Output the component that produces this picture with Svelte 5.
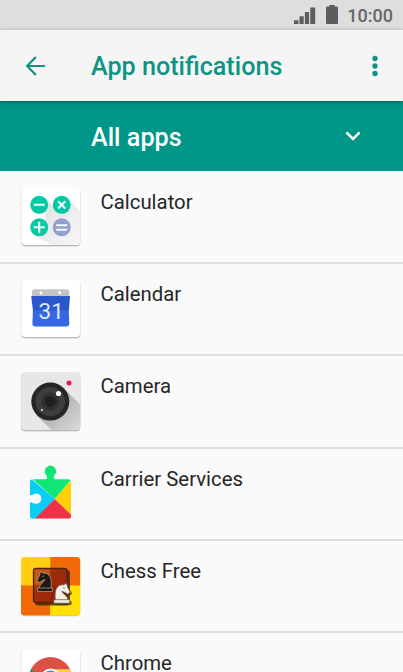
<script lang="ts">
	interface App {
		readonly id: string;
		readonly name: string;
	}

	const apps: readonly App[] = [
		{ id: 'calculator', name: 'Calculator' },
		{ id: 'calendar', name: 'Calendar' },
		{ id: 'camera', name: 'Camera' },
		{ id: 'carrier', name: 'Carrier Services' },
		{ id: 'chess', name: 'Chess Free' },
		{ id: 'chrome', name: 'Chrome' }
	];
</script>

{#snippet tile(fill: string)}
	<rect x="10.7" y="9" width="60" height="59.6" rx="4.5" fill="#000" opacity=".07" />
	<rect x="11.2" y="10" width="59" height="58.3" rx="4" fill="#b9b9b9" />
	<rect x="11.2" y="9.3" width="59" height="57.7" rx="4" {fill} />
{/snippet}

{#snippet knight()}
	<path
		d="M2 17C3 12 7 11 8 8L4.500 9.500L2.500 11L0 9L2.500 4L3.500 0L6.500 1.700C12 1 15.500 6 14 17Z"
	/>
	<path d="M.5 16.500h15v3.500H.5z" />
{/snippet}

<div class="screen">
	<div class="status">
		<svg class="signal" viewBox="0 0 22 17" aria-hidden="true">
			<path d="M0 13.300h4.500V17H0zM5.500 9.300h4.200V17H5.500zM10.900 5h4.200v12h-4.200zM16.300 0.500h4.900V17h-4.900z" fill="#5d5d5d" />
		</svg>
		<svg class="battery" viewBox="0 0 12 19" aria-hidden="true">
			<path d="M3.300 0h5.400v1.500h2.200q1.100 0 1.100 1.100v15.300q0 1.100-1.100 1.100H1.100Q0 19 0 17.900V2.600q0-1.100 1.100-1.100h2.200z" fill="#5d5d5d" />
		</svg>
		<span class="clock">10:00</span>
	</div>

	<header class="toolbar">
		<button type="button" class="back" aria-label="Back">
			<svg viewBox="0 0 20 20" aria-hidden="true">
				<path d="M20 10H2M10.900 1L2.100 10l8.800 9" fill="none" stroke="#0e9485" stroke-width="2.200" />
			</svg>
		</button>
		<h1>App notifications</h1>
		<button type="button" class="more" aria-label="More options">
			<svg viewBox="0 0 6 22" aria-hidden="true">
				<circle cx="3" cy="3.500" r="2.650" />
				<circle cx="3" cy="11" r="2.650" />
				<circle cx="3" cy="18.500" r="2.650" />
			</svg>
		</button>
	</header>

	<button type="button" class="filter">
		<span>All apps</span>
		<svg viewBox="0 0 16 10" aria-hidden="true">
			<path d="M1.400 1.400L8 7.900l6.600-6.500" fill="none" stroke="#fff" stroke-width="2.500" />
		</svg>
	</button>

	<ul class="apps">
		{#each apps as app (app.id)}
			<li>
				<svg class="icon" viewBox="8 6 64 65" aria-hidden="true">
					{#if app.id === 'calculator'}
						<defs>
							<linearGradient id="key-shadow" x1="0" y1="0" x2="1" y2="1">
								<stop offset=".3" stop-color="#e6e6e6" />
								<stop offset="1" stop-color="#f7f7f7" />
							</linearGradient>
						</defs>
						{@render tile('#fff')}
						<path d="M35.500 20.500L46 31L58 20.500L70.200 33V63q0 4-4 4H41L22.800 55.500L35 43Z" fill="url(#key-shadow)" />
						<circle cx="29.200" cy="26.800" r="9" fill="#06c9a4" />
						<circle cx="51.700" cy="26.800" r="9" fill="#06c9a4" />
						<circle cx="29.200" cy="49.300" r="9" fill="#06c9a4" />
						<circle cx="51.700" cy="49.300" r="9" fill="#939fcc" />
						<path
							d="M23.700 26.800h11M48.100 23.200l7.200 7.200M55.300 23.200l-7.200 7.200M23.700 49.300h11M29.200 43.800v11M46.200 47.200h11M46.200 51.700h11"
							fill="none"
							stroke="#f4fffc"
							stroke-width="2.100"
						/>
					{:else if app.id === 'calendar'}
						{@render tile('#fff')}
						<path d="M22 28v-6q0-2.700 2.700-2.700h32q2.600 0 2.600 2.700v6z" fill="#c3c3c3" />
						<circle cx="31" cy="22.700" r="1.500" fill="#fff" />
						<circle cx="49.700" cy="22.700" r="1.500" fill="#fff" />
						<path d="M22 26h37.200q1 0 .8 1.200L58.800 41H23L21.300 27.200Q21 26 22 26z" fill="#2a58cc" />
						<path d="M22.900 40.500h35.900L59.300 54q0 2.400-2.400 2.400H24.800q-2.400 0-2.400-2.400z" fill="#3568e2" />
						<text x="41.200" y="49.400" text-anchor="middle" class="date">31</text>
					{:else if app.id === 'camera'}
						<defs>
							<linearGradient id="lens-shadow" x1="0" y1="0" x2="1" y2="1">
								<stop offset=".3" stop-color="#a9a9a9" />
								<stop offset="1" stop-color="#dadada" />
							</linearGradient>
						</defs>
						{@render tile('#e7e7e7')}
						<path d="M53.500 25L70.200 41.500V63q0 4-4 4H41.500L26.500 52.500Z" fill="url(#lens-shadow)" />
						<circle cx="40.300" cy="38.600" r="19" fill="#252525" />
						<circle cx="40.300" cy="38.600" r="14.700" fill="#3e3e3e" />
						<circle cx="40.300" cy="38.600" r="9.200" fill="#303030" />
						<circle cx="40.300" cy="38.600" r="5.300" fill="#1e1e1e" />
						<circle cx="48.500" cy="30.500" r="2.600" fill="#fff" />
						<circle cx="31.900" cy="47.100" r="1.100" fill="#ddd" />
						<circle cx="59" cy="20" r="2.500" fill="#ed174f" />
					{:else if app.id === 'carrier'}
						<defs>
							<clipPath id="puzzle">
								<path
									d="M22.500 23.500H36.500Q37.800 20.500 36.100 19.300A5.700 5.700 0 1 1 44.800 19.300Q43 20.500 44.500 23.500H58.500Q61 23.500 61 26V60.500Q61 63 58.500 63H22.500Q20 63 20 60.500V46.200Q22.500 47.300 24 47.600A5.200 5.200 0 1 0 24 38.200Q22.500 39.300 20 39.600V26Q20 23.500 22.500 23.500Z"
								/>
							</clipPath>
						</defs>
						<g transform="translate(0 .7)">
							<g clip-path="url(#puzzle)">
								<path d="M20 8h46v10L44.800 43.300L20 21z" fill="#0fe676" />
								<path d="M16 18.500L44.800 43.300L24 66h-8z" fill="#09cdf5" />
								<path d="M66 18.500L44.800 43.300L66 64z" fill="#ffd008" />
								<path d="M44.800 43.300L66 64v5H19z" fill="#ee3248" />
							</g>
						</g>
					{:else if app.id === 'chess'}
						<defs>
							<linearGradient id="board" x1="0" y1="0" x2="1" y2="1">
								<stop offset="0" stop-color="#b84512" />
								<stop offset=".4" stop-color="#9a2b0c" />
								<stop offset="1" stop-color="#a42808" />
							</linearGradient>
							<clipPath id="chess-tile">
								<rect x="11" y="9" width="59.300" height="58.500" rx="4" />
							</clipPath>
						</defs>
						<rect x="11" y="9.800" width="59.300" height="58.500" rx="4" fill="#d4c9a5" />
						<g clip-path="url(#chess-tile)">
							<path d="M11 9h59.300v58.500H11z" fill="#ffcf12" />
							<path d="M40.300 9h30v29h-30zM11 37.500h29.300v30H11z" fill="#f16a09" />
							<path d="M40.300 37.500h30v30h-30z" fill="#ffe000" />
						</g>
						<rect x="25" y="22" width="35" height="35.500" rx="3" fill="#402400" opacity=".8" />
						<rect x="23.500" y="20.500" width="33.500" height="34" rx="2.500" fill="url(#board)" stroke="#54210b" stroke-width="1.300" />
						<path d="M24.500 21.500h15.500v15.500H24.500z" fill="#d06a16" opacity=".65" />
						<path d="M41 38h15v15H41z" fill="#8e2106" />
						<g transform="translate(27 23.500)" fill="#1d1918" stroke="#c2a38a" stroke-width=".7">
							{@render knight()}
							<path d="M5 5l2-.5" />
						</g>
						<g transform="translate(62.200 36.800) scale(-1.100 1)" fill="#3b2d19" opacity=".7">
							{@render knight()}
						</g>
						<g transform="translate(60.300 35.200) scale(-1.060 1)" fill="#f2eee4" stroke="#695c49" stroke-width=".7">
							{@render knight()}
							<path d="M5 5l2-.5" />
						</g>
					{:else}
						{@render tile('#fff')}
						<circle cx="40.500" cy="38.500" r="21.500" fill="#dd5145" />
						<path d="M40.500 29.200H59.800A21.500 21.500 0 0 1 40.500 60Z" fill="#fdcd45" />
						<path d="M21.500 28.400L32 43L42 60A21.500 21.500 0 0 1 21.500 28.400Z" fill="#1a9e60" />
						<circle cx="40.500" cy="38.500" r="10" fill="#f5f5f5" />
						<circle cx="40.500" cy="38.500" r="8" fill="#4a86ec" />
					{/if}
				</svg>
				<span class="name">{app.name}</span>
			</li>
		{/each}
	</ul>
</div>

<style>
	:global(body) {
		background: #fafafa;
	}
	.screen {
		height: 672px;
		overflow: hidden;
		display: flex;
		flex-direction: column;
		background: #fafafa;
		font-family: Roboto, 'Liberation Sans', sans-serif;
	}
	button {
		border: 0;
		padding: 0;
		background: none;
		font: inherit;
		cursor: pointer;
	}
	svg {
		display: block;
		flex: none;
	}
	.status {
		flex: none;
		box-sizing: border-box;
		height: 30px;
		padding-right: 10px;
		display: flex;
		align-items: center;
		justify-content: flex-end;
		background: #dedede;
	}
	.signal {
		width: 22px;
		height: 17px;
		margin-right: 10px;
		margin-top: 1px;
	}
	.battery {
		width: 12px;
		height: 19px;
		margin-right: 9.5px;
		margin-bottom: 1px;
	}
	.clock {
		font-size: 18px;
		font-weight: 500;
		line-height: 30px;
		padding-top: 1px;
		color: #666;
	}
	.toolbar {
		flex: none;
		position: relative;
		box-sizing: border-box;
		height: 71px;
		padding: 0 25px 0 25px;
		display: flex;
		align-items: center;
		background: #f5f5f5;
		box-shadow: 0 1px 4px rgba(0, 0, 0, 0.4);
	}
	.back svg {
		width: 20px;
		height: 20px;
	}
	h1 {
		flex: 1;
		margin: 0 0 0 46px;
		padding-top: 2px;
		font-size: 25.15px;
		font-weight: 500;
		line-height: 30px;
		color: #0e9485;
		white-space: nowrap;
	}
	.more svg {
		width: 6px;
		height: 22px;
		fill: #0e9485;
	}
	.filter {
		flex: none;
		box-sizing: border-box;
		height: 70px;
		padding: 0 42.5px 0 91px;
		display: flex;
		align-items: center;
		justify-content: space-between;
		background: #009688;
		color: #fff;
		font-size: 25.2px;
		font-weight: 500;
	}
	.filter span {
		padding-top: 2px;
	}
	.filter svg {
		width: 16px;
		height: 10px;
	}
	.apps {
		flex: none;
		margin: 0;
		padding: 0.5px 0 0;
		list-style: none;
	}
	li {
		box-sizing: border-box;
		height: 92.4px;
		padding: 4.5px 0 0 18px;
		display: flex;
		align-items: flex-start;
		border-bottom: 2px solid #dedede;
	}
	.icon {
		width: 64px;
		height: 65px;
		margin-top: 8px;
	}
	.name {
		margin: 11.5px 0 0 18.5px;
		font-size: 20.35px;
		line-height: 28px;
		color: #262626;
	}
	.date {
		font-family: Roboto, 'Liberation Sans', sans-serif;
		font-size: 22.5px;
		font-weight: 400;
		fill: #dfe8fc;
	}
</style>
